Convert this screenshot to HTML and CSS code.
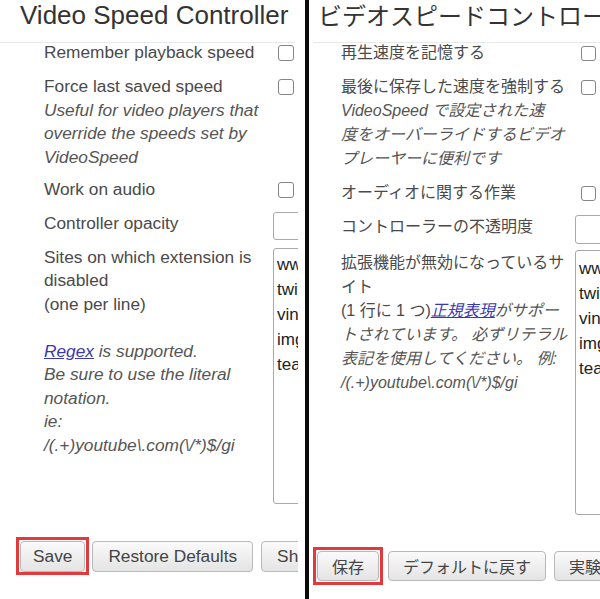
FILE: index.html
```html
<!DOCTYPE html>
<html lang="ja">
<head>
<meta charset="utf-8">
<title>Video Speed Controller</title>
<link rel="stylesheet" href="styles.css">
</head>
<body>
<div class="shot">
  <section class="panel panel-en">
    <div class="clip">
      <h1 class="title">Video Speed Controller</h1>
      <div class="rule"></div>
      <div class="rows">
        <div class="row">
          <div class="label">Remember playback speed</div>
          <input class="cb" type="checkbox">
        </div>
        <div class="row">
          <div class="label">Force last saved speed
            <div class="desc">Useful for video players that override the speeds set by VideoSpeed</div>
          </div>
          <input class="cb" type="checkbox">
        </div>
        <div class="row">
          <div class="label">Work on audio</div>
          <input class="cb" type="checkbox">
        </div>
        <div class="row row-input">
          <div class="label">Controller opacity</div>
          <input class="text" type="text">
        </div>
        <div class="row">
          <div class="label">Sites on which extension is disabled<br>(one per line)<br><br>
            <em class="note"><a href="#">Regex</a> is supported.<br>Be sure to use the literal notation.<br>ie:<br>/(.+)youtube\.com(\/*)$/gi</em>
          </div>
          <textarea class="sites">www.instagram.com
twitter.com
vine.co
imgur.com
teams.microsoft.com</textarea>
        </div>
      </div>
      <div class="buttons">
        <span class="mark"><button class="btn">Save</button></span>
        <button class="btn">Restore Defaults</button>
        <button class="btn">Show Experimental Features</button>
      </div>
    </div>
  </section>
  <div class="divider"></div>
  <section class="panel panel-ja">
    <div class="clip">
      <h1 class="title">ビデオスピードコントローラー</h1>
      <div class="rule"></div>
      <div class="rows">
        <div class="row">
          <div class="label">再生速度を記憶する</div>
          <input class="cb" type="checkbox">
        </div>
        <div class="row">
          <div class="label">最後に保存した速度を強制する
            <div class="desc">VideoSpeed で設定された速<br>度をオーバーライドするビデオ<br>プレーヤーに便利です</div>
          </div>
          <input class="cb" type="checkbox">
        </div>
        <div class="row">
          <div class="label">オーディオに関する作業</div>
          <input class="cb" type="checkbox">
        </div>
        <div class="row row-input">
          <div class="label">コントローラーの不透明度</div>
          <input class="text" type="text">
        </div>
        <div class="row">
          <div class="label">拡張機能が無効になっているサ<br>イト<br>(1 行に 1 つ)<em class="note"><a href="#">正規表現</a>がサポー<br>トされています。 必ずリテラル<br>表記を使用してください。 例:<br>/(.+)youtube\.com(\/*)$/gi</em>
          </div>
          <textarea class="sites">www.instagram.com
twitter.com
vine.co
imgur.com
teams.microsoft.com</textarea>
        </div>
      </div>
      <div class="buttons">
        <span class="mark"><button class="btn">保存</button></span>
        <button class="btn">デフォルトに戻す</button>
        <button class="btn">実験的な機能を表示</button>
      </div>
    </div>
  </section>
</div>
</body>
</html>
```
FILE: styles.css
```css
* { box-sizing: border-box; }
html, body {
  margin: 0;
  padding: 0;
  background: #fff;
  overflow: hidden;
}
body {
  width: 600px;
  height: 599px;
  font-family: "Liberation Sans", "Noto Sans CJK JP", sans-serif;
  color: #4a4a4a;
}
.shot {
  display: flex;
  width: 600px;
  height: 599px;
}
.panel {
  height: 599px;
  overflow: hidden;
}
.panel-en { width: 305px; flex: none; }
.panel-en .clip { width: 298px; overflow: hidden; height: 100%; }
.divider {
  width: 4px;
  height: 599px;
  background: #0a0a0a;
  flex: none;
}
.panel-ja { flex: 1; }
.panel-ja .clip { width: 100%; overflow: hidden; height: 100%; }

.title {
  margin: 0;
  font-weight: normal;
  white-space: nowrap;
  color: #333;
}
.panel-en .title {
  font-size: 26px;
  line-height: 30px;
  padding-left: 20px;
  height: 42px;
}
.panel-ja .title {
  font-size: 24px;
  line-height: 30px;
  padding-left: 9px;
  height: 42px;
  font-family: "Noto Sans CJK JP", sans-serif;
}
.rule {
  height: 1px;
  background: #e8e8e8;
}
.panel-en .rule { margin: 0 3px 0 0; }
.panel-ja .rule { margin: 0 0 0 4px; }

.rows { display: flex; flex-direction: column; }
.row {
  display: grid;
  align-items: start;
}
.panel-en .rows { padding-left: 44px; }
.panel-en .row {
  grid-template-columns: 229px auto;
  margin-bottom: 10.5px;
  font-size: 17.3px;
  line-height: 23.5px;
}
.panel-ja .rows { padding-left: 32px; }
.panel-ja .row {
  grid-template-columns: 234px auto;
  margin-bottom: 10px;
  font-size: 16px;
  line-height: 24px;
}
.panel-en .rows .row:first-child,
.panel-ja .rows .row:first-child { margin-top: -2px; }

.desc {
  font-style: italic;
  color: #555;
}
.panel-en .desc { margin-bottom: -2px; }
.panel-ja .desc { font-size: 16px; }
.panel-ja .desc, .panel-ja .note { font-family: "Liberation Sans", "Noto Sans CJK JP", sans-serif; }
.note {
  font-style: italic;
  color: #555;
}
.panel-en .note { font-size: 17.3px; }
.note a {
  color: #3a38b0;
  text-decoration: underline;
}

.cb {
  appearance: none;
  -webkit-appearance: none;
  margin: 0;
  width: 16px;
  height: 16px;
  border: 1.5px solid #858585;
  border-radius: 3px;
  background: #fff;
}
.panel-en .cb { margin: 4px 0 0 5px; }
.panel-ja .cb { margin: 5px 0 0 6px; width: 15px; height: 15px; }

.text {
  margin: 0;
  width: 80px;
  height: 28px;
  border: 1px solid #a9a9a9;
  border-radius: 3px;
  background: #fff;
}
.panel-en .row-input .text { margin-bottom: -4.5px; }
.panel-ja .row-input .text { height: 29px; margin-bottom: -3px; }

.sites {
  margin: 0;
  width: 200px;
  resize: none;
  border: 1px solid #a9a9a9;
  border-radius: 3px;
  background: #fff;
  color: #222;
  font-family: "Liberation Sans", sans-serif;
  white-space: pre;
  overflow: hidden;
  padding: 3px 3px;
}
.panel-en .sites {
  margin-top: 2px;
  height: 256px;
  font-size: 17px;
  line-height: 25px;
}
.panel-ja .sites {
  margin-top: -1px;
  height: 265px;
  font-size: 17px;
  line-height: 25px;
  padding-top: 5px;
}

.buttons {
  display: flex;
  align-items: center;
  white-space: nowrap;
}
.panel-en .buttons { padding: 23px 0 0 16px; gap: 8px; }
.panel-ja .buttons { padding: 22px 0 0 4px; gap: 8px; }
.mark {
  flex: none;
  display: flex;
  align-items: center;
  justify-content: center;
  border: 3px solid #e2393c;
  padding: 0 1px;
  height: 38px;
}
.panel-en .mark { margin-right: -5px; }
.panel-ja .mark { margin-right: -3px; }
.btn {
  flex: none;
  margin: 0;
  border: 1px solid #b9b9b9;
  border-radius: 4px;
  background: linear-gradient(#fafafa, #e4e4e4);
  color: #444;
  font-family: "Liberation Sans", "Noto Sans CJK JP", sans-serif;
  white-space: nowrap;
}
.panel-en .btn {
  height: 31px;
  padding: 0 15px;
  font-size: 17.3px;
}
.panel-en .mark .btn { padding: 0 12px; }
.panel-ja .btn {
  height: 30px;
  padding: 0 14px;
  font-size: 16px;
}
.panel-ja .mark .btn { padding: 0 14px; }
```
